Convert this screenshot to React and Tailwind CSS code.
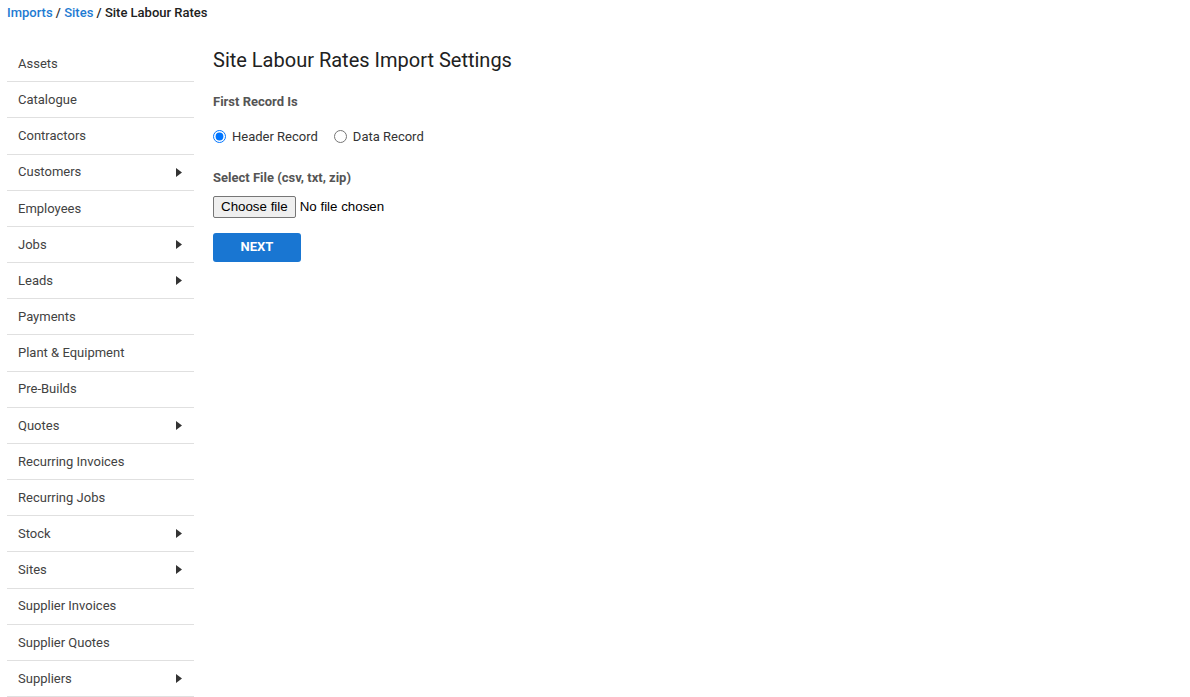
import React, { useState } from 'react';

const menuItems = [
  { label: 'Assets' },
  { label: 'Catalogue' },
  { label: 'Contractors' },
  { label: 'Customers', sub: true },
  { label: 'Employees' },
  { label: 'Jobs', sub: true },
  { label: 'Leads', sub: true },
  { label: 'Payments' },
  { label: 'Plant & Equipment' },
  { label: 'Pre-Builds' },
  { label: 'Quotes', sub: true },
  { label: 'Recurring Invoices' },
  { label: 'Recurring Jobs' },
  { label: 'Stock', sub: true },
  { label: 'Sites', sub: true },
  { label: 'Supplier Invoices' },
  { label: 'Supplier Quotes' },
  { label: 'Suppliers', sub: true },
];

function App() {
  const [firstRecord, setFirstRecord] = useState('header');
  const [fileName, setFileName] = useState('');

  return (
    <div
      className="min-h-screen bg-white text-[13px] text-[#333]"
      style={{ fontFamily: 'Roboto, "Liberation Sans", sans-serif' }}
    >
      {/* breadcrumb */}
      <div className="px-[7px] pt-[4px] leading-[17px] font-medium">
        <a href="#" className="text-[#1e7bd2]">Imports</a>
        <span className="text-[#333]"> / </span>
        <a href="#" className="text-[#1e7bd2]">Sites</a>
        <span className="text-[#212121]"> / Site Labour Rates</span>
      </div>

      <div className="flex gap-[19px] px-[7px] pt-[25px]">
        {/* side menu */}
        <ul className="w-[187px] shrink-0">
          {menuItems.map((item) => (
            <li
              key={item.label}
              className="flex h-[36.18px] items-center justify-between border-b border-[#e0e0e0] pl-[11px] pr-[12px] text-[13px] text-[#424242]"
            >
              <span>{item.label}</span>
              {item.sub && (
                <svg width="6" height="9" viewBox="0 0 6 9" className="text-[#333]">
                  <path d="M0 0 L6 4.5 L0 9 Z" fill="currentColor" />
                </svg>
              )}
            </li>
          ))}
        </ul>

        {/* import settings form */}
        <div className="flex-1 pt-[2px]">
          <h1 className="text-[20px] leading-[24px] font-normal text-[#212121]">
            Site Labour Rates Import Settings
          </h1>

          <div className="mt-[22px] text-[13px] font-bold text-[#555] leading-[16px]">First Record Is</div>

          <div className="mt-[17px] flex items-center gap-[16px] text-[13px] text-[#333]">
            <label className="flex items-center gap-[6px]">
              <input
                type="radio"
                name="firstRecord"
                checked={firstRecord === 'header'}
                onChange={() => setFirstRecord('header')}
                className="m-0 h-[13px] w-[13px]"
              />
              Header Record
            </label>
            <label className="flex items-center gap-[6px]">
              <input
                type="radio"
                name="firstRecord"
                checked={firstRecord === 'data'}
                onChange={() => setFirstRecord('data')}
                className="m-0 h-[13px] w-[13px]"
              />
              Data Record
            </label>
          </div>

          <div className="mt-[23px] text-[13px] font-bold text-[#555] leading-[16px]">Select File (csv, txt, zip)</div>

          <label
            className="mt-[10px] flex items-center gap-[4px] text-[13.33px] text-black"
            style={{ fontFamily: '"Liberation Sans", Arial, sans-serif' }}
          >
            <input
              type="file"
              accept=".csv,.txt,.zip"
              className="hidden"
              onChange={(e) => setFileName(e.target.files[0] ? e.target.files[0].name : '')}
            />
            <span className="flex h-[22px] items-center rounded-[2px] border border-[#767676] bg-[#efefef] px-[7px]">
              Choose file
            </span>
            <span>{fileName || 'No file chosen'}</span>
          </label>

          <button
            type="button"
            className="mt-[15px] h-[29px] w-[88px] rounded-[3px] bg-[#1976d2] text-[13px] font-bold text-white"
          >
            NEXT
          </button>
        </div>
      </div>
    </div>
  );
}

export default App;
